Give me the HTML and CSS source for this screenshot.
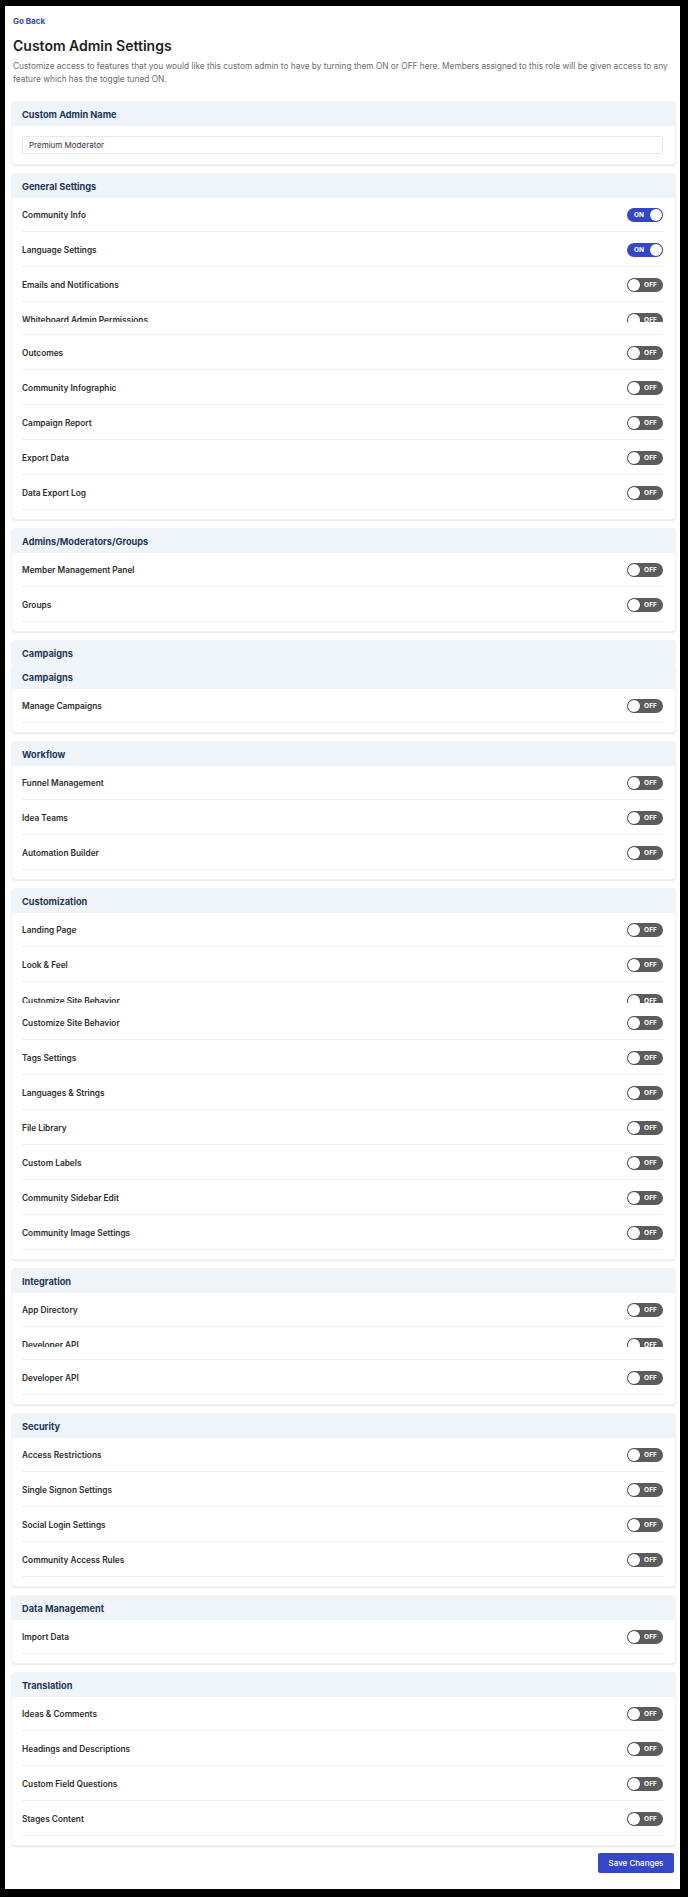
FILE: index.html
```html
<!DOCTYPE html>
<html lang="en">
<head>
<meta charset="utf-8">
<title>Custom Admin Settings</title>
<link rel="stylesheet" href="styles.css">
</head>
<body>
<div class="page">
  <a class="back" href="#">Go Back</a>
  <h1 class="title">Custom Admin Settings</h1>
  <p class="desc">Customize access to features that you would like this custom admin to have by turning them ON or OFF here. Members assigned to this role will be given access to any feature which has the toggle tuned ON.</p>

  <section class="card">
    <div class="card-head">Custom Admin Name</div>
    <div class="card-body card-body--input">
      <div class="input">Premium Moderator</div>
    </div>
  </section>

  <section class="card">
    <div class="card-head">General Settings</div>
    <div class="card-body">
      <div class="row"><span class="label">Community Info</span><span class="toggle on"><span class="tl">ON</span><span class="knob"></span></span></div>
      <div class="row"><span class="label">Language Settings</span><span class="toggle on"><span class="tl">ON</span><span class="knob"></span></span></div>
      <div class="row"><span class="label">Emails and Notifications</span><span class="toggle"><span class="knob"></span><span class="tl">OFF</span></span></div>
      <div class="row row--cut"><div class="cut"><div class="row-in"><span class="label">Whiteboard Admin Permissions</span><span class="toggle"><span class="knob"></span><span class="tl">OFF</span></span></div></div></div>
      <div class="row"><span class="label">Outcomes</span><span class="toggle"><span class="knob"></span><span class="tl">OFF</span></span></div>
      <div class="row"><span class="label">Community Infographic</span><span class="toggle"><span class="knob"></span><span class="tl">OFF</span></span></div>
      <div class="row"><span class="label">Campaign Report</span><span class="toggle"><span class="knob"></span><span class="tl">OFF</span></span></div>
      <div class="row"><span class="label">Export Data</span><span class="toggle"><span class="knob"></span><span class="tl">OFF</span></span></div>
      <div class="row"><span class="label">Data Export Log</span><span class="toggle"><span class="knob"></span><span class="tl">OFF</span></span></div>
    </div>
  </section>

  <section class="card">
    <div class="card-head">Admins/Moderators/Groups</div>
    <div class="card-body">
      <div class="row"><span class="label">Member Management Panel</span><span class="toggle"><span class="knob"></span><span class="tl">OFF</span></span></div>
      <div class="row"><span class="label">Groups</span><span class="toggle"><span class="knob"></span><span class="tl">OFF</span></span></div>
    </div>
  </section>

  <section class="card card--cut">
    <div class="card-head">Campaigns</div>
  </section>

  <section class="card">
    <div class="card-head">Campaigns</div>
    <div class="card-body">
      <div class="row"><span class="label">Manage Campaigns</span><span class="toggle"><span class="knob"></span><span class="tl">OFF</span></span></div>
    </div>
  </section>

  <section class="card">
    <div class="card-head">Workflow</div>
    <div class="card-body">
      <div class="row"><span class="label">Funnel Management</span><span class="toggle"><span class="knob"></span><span class="tl">OFF</span></span></div>
      <div class="row"><span class="label">Idea Teams</span><span class="toggle"><span class="knob"></span><span class="tl">OFF</span></span></div>
      <div class="row"><span class="label">Automation Builder</span><span class="toggle"><span class="knob"></span><span class="tl">OFF</span></span></div>
    </div>
  </section>

  <section class="card">
    <div class="card-head">Customization</div>
    <div class="card-body">
      <div class="row"><span class="label">Landing Page</span><span class="toggle"><span class="knob"></span><span class="tl">OFF</span></span></div>
      <div class="row"><span class="label">Look &amp; Feel</span><span class="toggle"><span class="knob"></span><span class="tl">OFF</span></span></div>
      <div class="row row--cut2"><div class="cut cut--short"><div class="row-in"><span class="label">Customize Site Behavior</span><span class="toggle"><span class="knob"></span><span class="tl">OFF</span></span></div></div></div>
      <div class="row"><span class="label">Customize Site Behavior</span><span class="toggle"><span class="knob"></span><span class="tl">OFF</span></span></div>
      <div class="row"><span class="label">Tags Settings</span><span class="toggle"><span class="knob"></span><span class="tl">OFF</span></span></div>
      <div class="row"><span class="label">Languages &amp; Strings</span><span class="toggle"><span class="knob"></span><span class="tl">OFF</span></span></div>
      <div class="row"><span class="label">File Library</span><span class="toggle"><span class="knob"></span><span class="tl">OFF</span></span></div>
      <div class="row"><span class="label">Custom Labels</span><span class="toggle"><span class="knob"></span><span class="tl">OFF</span></span></div>
      <div class="row"><span class="label">Community Sidebar Edit</span><span class="toggle"><span class="knob"></span><span class="tl">OFF</span></span></div>
      <div class="row"><span class="label">Community Image Settings</span><span class="toggle"><span class="knob"></span><span class="tl">OFF</span></span></div>
    </div>
  </section>

  <section class="card">
    <div class="card-head">Integration</div>
    <div class="card-body">
      <div class="row"><span class="label">App Directory</span><span class="toggle"><span class="knob"></span><span class="tl">OFF</span></span></div>
      <div class="row row--cut"><div class="cut"><div class="row-in"><span class="label">Developer API</span><span class="toggle"><span class="knob"></span><span class="tl">OFF</span></span></div></div></div>
      <div class="row"><span class="label">Developer API</span><span class="toggle"><span class="knob"></span><span class="tl">OFF</span></span></div>
    </div>
  </section>

  <section class="card">
    <div class="card-head">Security</div>
    <div class="card-body">
      <div class="row"><span class="label">Access Restrictions</span><span class="toggle"><span class="knob"></span><span class="tl">OFF</span></span></div>
      <div class="row"><span class="label">Single Signon Settings</span><span class="toggle"><span class="knob"></span><span class="tl">OFF</span></span></div>
      <div class="row"><span class="label">Social Login Settings</span><span class="toggle"><span class="knob"></span><span class="tl">OFF</span></span></div>
      <div class="row"><span class="label">Community Access Rules</span><span class="toggle"><span class="knob"></span><span class="tl">OFF</span></span></div>
    </div>
  </section>

  <section class="card">
    <div class="card-head">Data Management</div>
    <div class="card-body">
      <div class="row"><span class="label">Import Data</span><span class="toggle"><span class="knob"></span><span class="tl">OFF</span></span></div>
    </div>
  </section>

  <section class="card">
    <div class="card-head">Translation</div>
    <div class="card-body">
      <div class="row"><span class="label">Ideas &amp; Comments</span><span class="toggle"><span class="knob"></span><span class="tl">OFF</span></span></div>
      <div class="row"><span class="label">Headings and Descriptions</span><span class="toggle"><span class="knob"></span><span class="tl">OFF</span></span></div>
      <div class="row"><span class="label">Custom Field Questions</span><span class="toggle"><span class="knob"></span><span class="tl">OFF</span></span></div>
      <div class="row"><span class="label">Stages Content</span><span class="toggle"><span class="knob"></span><span class="tl">OFF</span></span></div>
    </div>
  </section>

  <div class="actions">
    <button class="save" type="button">Save Changes</button>
  </div>
</div>
</body>
</html>
```

FILE: styles.css
```css
* { box-sizing: border-box; }

html, body {
  margin: 0;
  padding: 0;
  background: #000;
}

body {
  font-family: Inter, "Noto Sans", "Liberation Sans", sans-serif;
  color: #2b2b2b;
}

.page {
  margin: 6px 8px 8px 5px;
  width: 675px;
  min-height: 1883px;
  background: #fff;
  padding: 10px 5px 16px 7px;
  display: flex;
  flex-direction: column;
}

.back {
  display: block;
  margin-left: 1px;
  font-size: 8px;
  line-height: 10px;
  font-weight: 700;
  color: #3447c8;
  text-decoration: none;
}

.title {
  margin: 11px 0 0 1px;
  font-size: 14px;
  line-height: 18px;
  font-weight: 600;
  color: #222;
}

.desc {
  margin: 5px 0 16px 1px;
  font-size: 8.3px;
  line-height: 13px;
  color: #6b6b6b;
}

.card {
  background: #fff;
  border-radius: 3px;
  box-shadow: 0 0 0 1px #f1f3f5, 0 1px 2px rgba(0, 0, 0, 0.28);
  margin-bottom: 10px;
  overflow: hidden;
  flex: none;
}

.card--cut {
  height: 22px;
  margin-bottom: 2px;
}

.card-head {
  height: 24px;
  display: flex;
  align-items: center;
  padding: 0 10px;
  background: #eff4f9;
  font-size: 9.2px;
  font-weight: 700;
  color: #1d3657;
}

.card-body {
  padding: 0 12px 9px 10px;
}

.card-body--input {
  padding: 10px 12px 10px 10px;
}

.input {
  height: 18px;
  border: 1px solid #e6e8eb;
  border-radius: 2px;
  padding: 0 6px;
  display: flex;
  align-items: center;
  font-size: 8px;
  color: #333;
}

.row {
  height: 35px;
  padding-top: 2px;
  border-bottom: 1px solid #eef0f2;
  display: flex;
  align-items: center;
  justify-content: space-between;
}

.row:first-child {
  height: 34px;
  padding-top: 1px;
}

.row-in {
  height: 34px;
  padding-top: 2px;
  display: flex;
  align-items: center;
  justify-content: space-between;
}

.row.row--cut {
  height: 33px;
  padding-top: 0;
  align-items: flex-start;
}

.row.row--cut2 {
  height: 23px;
  padding-top: 0;
  border-bottom: none;
  align-items: flex-start;
}

.cut {
  width: 100%;
  height: 20px;
  overflow: hidden;
}

.cut--short {
  height: 21px;
}

.cut--short .row-in {
  padding-top: 4px;
}

.label {
  font-size: 8.3px;
  font-weight: 600;
  color: #2e2e2e;
}

.toggle {
  width: 36px;
  height: 14px;
  border-radius: 7px;
  background: #5c5c5c;
  display: flex;
  align-items: center;
  justify-content: space-between;
  padding: 0 1px;
  flex: none;
}

.toggle.on {
  background: #3447c8;
  padding-left: 7px;
}

.toggle:not(.on) {
  padding-right: 6px;
}

.knob {
  width: 12px;
  height: 12px;
  border-radius: 50%;
  background: #fff;
  box-shadow: 0 0 0 0.5px rgba(0, 0, 0, 0.25);
}

.tl {
  font-size: 6.5px;
  font-weight: 700;
  color: #fff;
  letter-spacing: 0.1px;
}

.actions {
  display: flex;
  justify-content: flex-end;
  margin-top: -2px;
  padding-right: 1px;
}

.save {
  width: 76px;
  height: 20px;
  border: none;
  border-radius: 2px;
  background: #3447c8;
  color: #fff;
  font-family: inherit;
  font-size: 8px;
  font-weight: 500;
  padding: 0;
}
```
